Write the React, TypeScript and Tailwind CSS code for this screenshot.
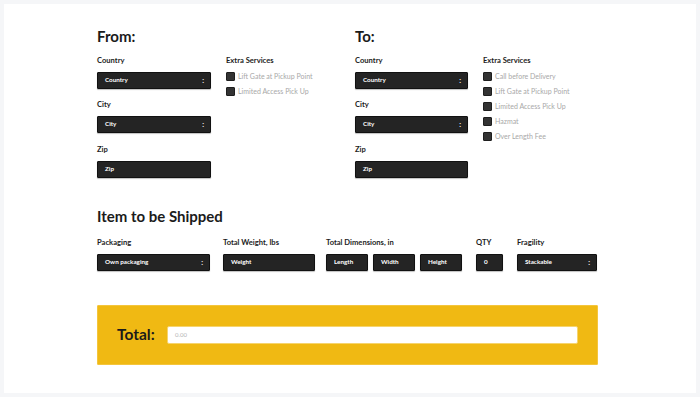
import React from "react";

const font = { fontFamily: "Lato, 'Open Sans', 'Liberation Sans', sans-serif" };

function Label({ children }: { children: React.ReactNode }) {
  return <div className="text-[7.6px] leading-[9px] font-bold text-[#1d1d1d] mb-[7px] whitespace-nowrap">{children}</div>;
}

function Select({ text, w }: { text: string; w: string }) {
  return (
    <div className={`${w} h-[17px] bg-[#242424] border border-[#111] rounded-[1px] flex items-center justify-between pl-[7px] pr-[6px] shadow-[0_1px_1px_rgba(0,0,0,0.25)]`}>
      <span className="text-[6.3px] font-bold text-white leading-none">{text}</span>
      <span className="text-[7px] font-bold text-white leading-none">:</span>
    </div>
  );
}

function Input({ text, w }: { text: string; w: string }) {
  return (
    <div className={`${w} h-[17px] bg-[#242424] border border-[#111] rounded-[1px] flex items-center pl-[7px] shadow-[0_1px_1px_rgba(0,0,0,0.25)]`}>
      <span className="text-[6.3px] font-bold text-white leading-none">{text}</span>
    </div>
  );
}

function Check({ text }: { text: string }) {
  return (
    <div className="flex items-center h-[15px]">
      <div className="w-[9px] h-[9px] bg-[#333] border border-[#1e1e1e] rounded-[1px] mr-[3px]" />
      <span className="text-[7px] text-[#a8a8a8] leading-none whitespace-nowrap">{text}</span>
    </div>
  );
}

function Address({ title, services, w }: { title: string; services: string[]; w: string }) {
  return (
    <div className="flex flex-col w-[258px]">
      <div className="text-[15px] leading-[16px] font-bold text-[#1b1b1b] mb-[12px]">{title}</div>
      <div className="flex">
        <div className={`flex flex-col ${w}`}>
          <Label>Country</Label>
          <Select text="Country" w="w-full" />
          <div className="h-[11px]" />
          <Label>City</Label>
          <Select text="City" w="w-full" />
          <div className="h-[12px]" />
          <Label>Zip</Label>
          <Input text="Zip" w="w-full" />
        </div>
        <div className="flex flex-col ml-[15px]">
          <Label>Extra Services</Label>
          <div className="flex flex-col -mt-[3px]">
            {services.map((s) => (
              <Check key={s} text={s} />
            ))}
          </div>
        </div>
      </div>
    </div>
  );
}

export default function App() {
  return (
    <div className="w-[700px] h-[397px] bg-[#f5f6f8] pt-[4px] pl-[4px] pr-[4px] pb-[4px]" style={font}>
      <div className="w-[692px] h-[389px] bg-white pl-[93px] pt-[24px]">
        <div className="flex">
          <Address title="From:" services={["Lift Gate at Pickup Point", "Limited Access Pick Up"]} w="w-[114px]" />
          <Address
            title="To:"
            services={["Call before Delivery", "Lift Gate at Pickup Point", "Limited Access Pick Up", "Hazmat", "Over Length Fee"]}
            w="w-[113px]"
          />
        </div>
        <div className="text-[15px] leading-[16px] font-bold text-[#1b1b1b] mt-[30px] mb-[14px]">Item to be Shipped</div>
        <div className="flex">
          <div className="flex flex-col w-[113px]">
            <Label>Packaging</Label>
            <Select text="Own packaging" w="w-full" />
          </div>
          <div className="flex flex-col w-[92px] ml-[13px]">
            <Label>Total Weight, lbs</Label>
            <Input text="Weight" w="w-full" />
          </div>
          <div className="flex flex-col ml-[11px]">
            <Label>Total Dimensions, in</Label>
            <div className="flex gap-[5px]">
              <Input text="Length" w="w-[42px]" />
              <Input text="Width" w="w-[42px]" />
              <Input text="Height" w="w-[42px]" />
            </div>
          </div>
          <div className="flex flex-col w-[27px] ml-[14px]">
            <Label>QTY</Label>
            <Input text="0" w="w-full" />
          </div>
          <div className="flex flex-col w-[80px] ml-[14px]">
            <Label>Fragility</Label>
            <Select text="Stackable" w="w-full" />
          </div>
        </div>
        <div className="mt-[34px] w-[501px] h-[60px] bg-[#f0b913] border border-[#f4c53c] rounded-[1px] flex items-center pl-[19px]">
          <span className="text-[15.5px] font-bold text-[#1b1b1b] leading-none w-[50px]">Total:</span>
          <div className="w-[411px] h-[18px] bg-white border border-[#f6d46e] rounded-[2px] flex items-center pl-[7px]">
            <span className="text-[6px] text-[#b5b5b5] leading-none">0.00</span>
          </div>
        </div>
      </div>
    </div>
  );
}
